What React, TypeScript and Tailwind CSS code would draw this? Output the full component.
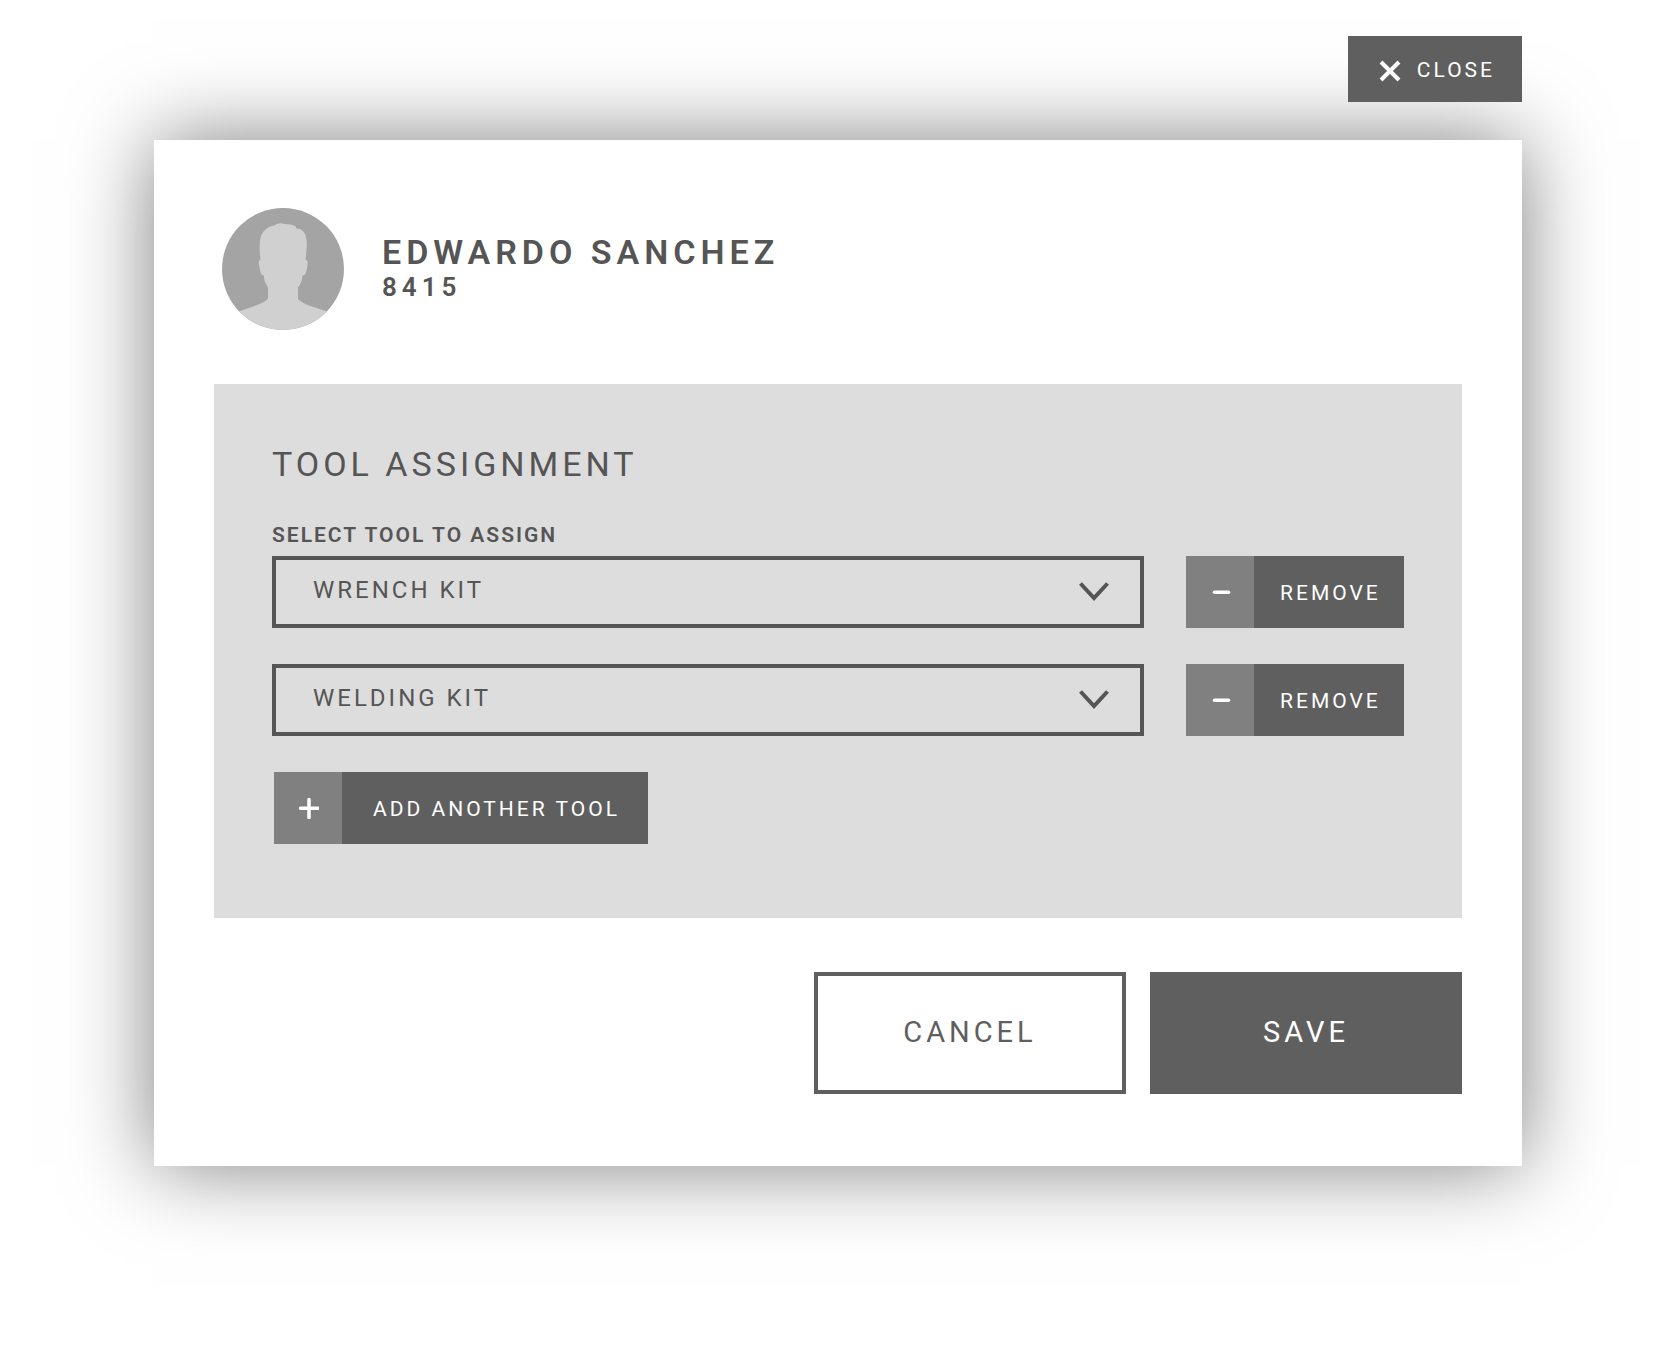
import { useState } from "react";

const TOOLS = ["WRENCH KIT", "WELDING KIT", "SOLDERING KIT", "SOCKET SET"];

function Avatar() {
  return (
    <svg viewBox="0 0 122 122" className="size-[122px] shrink-0" role="img" aria-label="Employee photo">
      <defs>
        <clipPath id="avatar-circle">
          <circle cx="61" cy="61" r="61" />
        </clipPath>
      </defs>
      <g clipPath="url(#avatar-circle)">
        <rect width="122" height="122" fill="#a4a4a4" />
        <path
          d="M17 103.500C27 99.500 42 96 46 90.500V79.500C43 75 42 72 41.700 67C39.500 68 38.500 65 37.800 61C37 56.500 35.500 52.500 38.600 52C37.500 46 37.500 38 38 34C38.500 24.500 44 20 49 18.200C51 18 52.500 17.500 53.800 16.500C57 15 60 15 62 16C64 15.700 66 16 68 16.400C70 16.300 72 17.500 73.500 18.300C74.500 19 74.300 20.500 75 21C77 20.500 78.500 20.800 79.500 22C83.500 24.500 84.500 29 84.700 35C85 41 84 47 83.600 52C86.500 52 85.800 56 85 60C84.200 65 83.200 68 80.600 67C80.300 72 79 76 76 79.500V91C81 97 96 100 105 103.500V122H17Z"
          fill="#d0d0d0"
        />
      </g>
    </svg>
  );
}

function CloseIcon() {
  return (
    <svg viewBox="0 0 22 22" className="size-[22px]" fill="none" stroke="currentColor" strokeWidth="4" aria-hidden="true">
      <path d="M2 2 20 20M20 2 2 20" />
    </svg>
  );
}

function ChevronIcon() {
  return (
    <svg
      viewBox="0 0 30 20"
      className="pointer-events-none absolute right-[35px] top-[26px] h-5 w-[30px]"
      fill="none"
      stroke="#555555"
      strokeWidth="4"
      aria-hidden="true"
    >
      <path d="M1.500 1.500 15 16 28.500 1.500" />
    </svg>
  );
}

function MinusIcon() {
  return (
    <svg viewBox="0 0 22 22" className="size-[22px]" stroke="currentColor" strokeWidth="3.500" strokeLinecap="round" aria-hidden="true">
      <path d="M5.500 11.300H19.500" />
    </svg>
  );
}

function PlusIcon() {
  return (
    <svg viewBox="0 0 22 22" className="size-[22px]" stroke="currentColor" strokeWidth="3.500" strokeLinecap="round" aria-hidden="true">
      <path d="M3.500 11.300H21M12 2.500V20.500" />
    </svg>
  );
}

export default function App() {
  const [tools, setTools] = useState(["WRENCH KIT", "WELDING KIT"]);

  return (
    <div className="min-h-screen bg-white pt-9 pr-[150px] pb-[180px] pl-[154px] font-['Roboto',sans-serif] text-[#555555]">
      <div className="relative z-10 flex justify-end">
        <button type="button" className="flex h-[66px] items-center gap-4 bg-[#5f5f5f] pt-1 pr-[27px] pl-[31px] text-[21px] tracking-[3px] text-white">
          <CloseIcon />
          CLOSE
        </button>
      </div>

      <main className="mt-[38px] bg-white px-15 pt-[68px] pb-18 shadow-[0_0_80px_rgba(0,0,0,0.5)]">
        <header className="flex items-center gap-[38px] pl-2">
          <Avatar />
          <div className="pb-1 font-semibold">
            <h1 className="text-[34px] leading-10 tracking-[5px]">EDWARDO SANCHEZ</h1>
            <p className="text-[26px] leading-[30px] tracking-[5px]">8415</p>
          </div>
        </header>

        <section className="mt-[54px] bg-[#dddddd] px-[58px] pt-[60px] pb-[74px]">
          <h2 className="text-[34px] leading-10 tracking-[4px]">TOOL ASSIGNMENT</h2>
          <label htmlFor="tool-0" className="mt-[37px] block text-[21px] leading-7 font-semibold tracking-[2px]">
            SELECT TOOL TO ASSIGN
          </label>

          <div className="mt-[7px] flex flex-col gap-9">
            {tools.map((tool, index) => (
              <div key={index} className="flex gap-[42px]">
                <div className="relative flex-1">
                  <select
                    id={`tool-${index}`}
                    aria-label={index === 0 ? undefined : `Tool ${index + 1}`}
                    value={tool}
                    onChange={(event) => setTools(tools.map((t, i) => (i === index ? event.target.value : t)))}
                    className="h-18 w-full appearance-none border-4 border-[#555555] bg-transparent pb-1 pl-[37px] text-[24px] tracking-[3px]"
                  >
                    {TOOLS.map((name) => (
                      <option key={name}>{name}</option>
                    ))}
                  </select>
                  <ChevronIcon />
                </div>
                <button
                  type="button"
                  onClick={() => setTools(tools.filter((_, i) => i !== index))}
                  className="flex h-18 w-[218px] text-[21px] tracking-[3px] text-white"
                >
                  <span className="flex h-full w-17 items-center justify-center bg-[#808080]">
                    <MinusIcon />
                  </span>
                  <span className="flex h-full flex-1 items-center bg-[#5f5f5f] pt-1 pl-[26px]">REMOVE</span>
                </button>
              </div>
            ))}
            <button
              type="button"
              onClick={() => setTools([...tools, TOOLS[0]])}
              className="ml-[2px] flex h-18 w-[374px] text-[21px] tracking-[3px] text-white"
            >
              <span className="flex h-full w-17 items-center justify-center bg-[#808080]">
                <PlusIcon />
              </span>
              <span className="flex h-full flex-1 items-center bg-[#5f5f5f] pt-1 pl-[31px]">ADD ANOTHER TOOL</span>
            </button>
          </div>
        </section>

        <footer className="mt-[54px] flex justify-end gap-6 text-[29px] tracking-[4px]">
          <button type="button" className="h-[122px] w-[312px] border-4 border-[#5f5f5f] text-[#5f5f5f]">
            CANCEL
          </button>
          <button type="button" className="h-[122px] w-[312px] bg-[#5f5f5f] text-white">
            SAVE
          </button>
        </footer>
      </main>
    </div>
  );
}
